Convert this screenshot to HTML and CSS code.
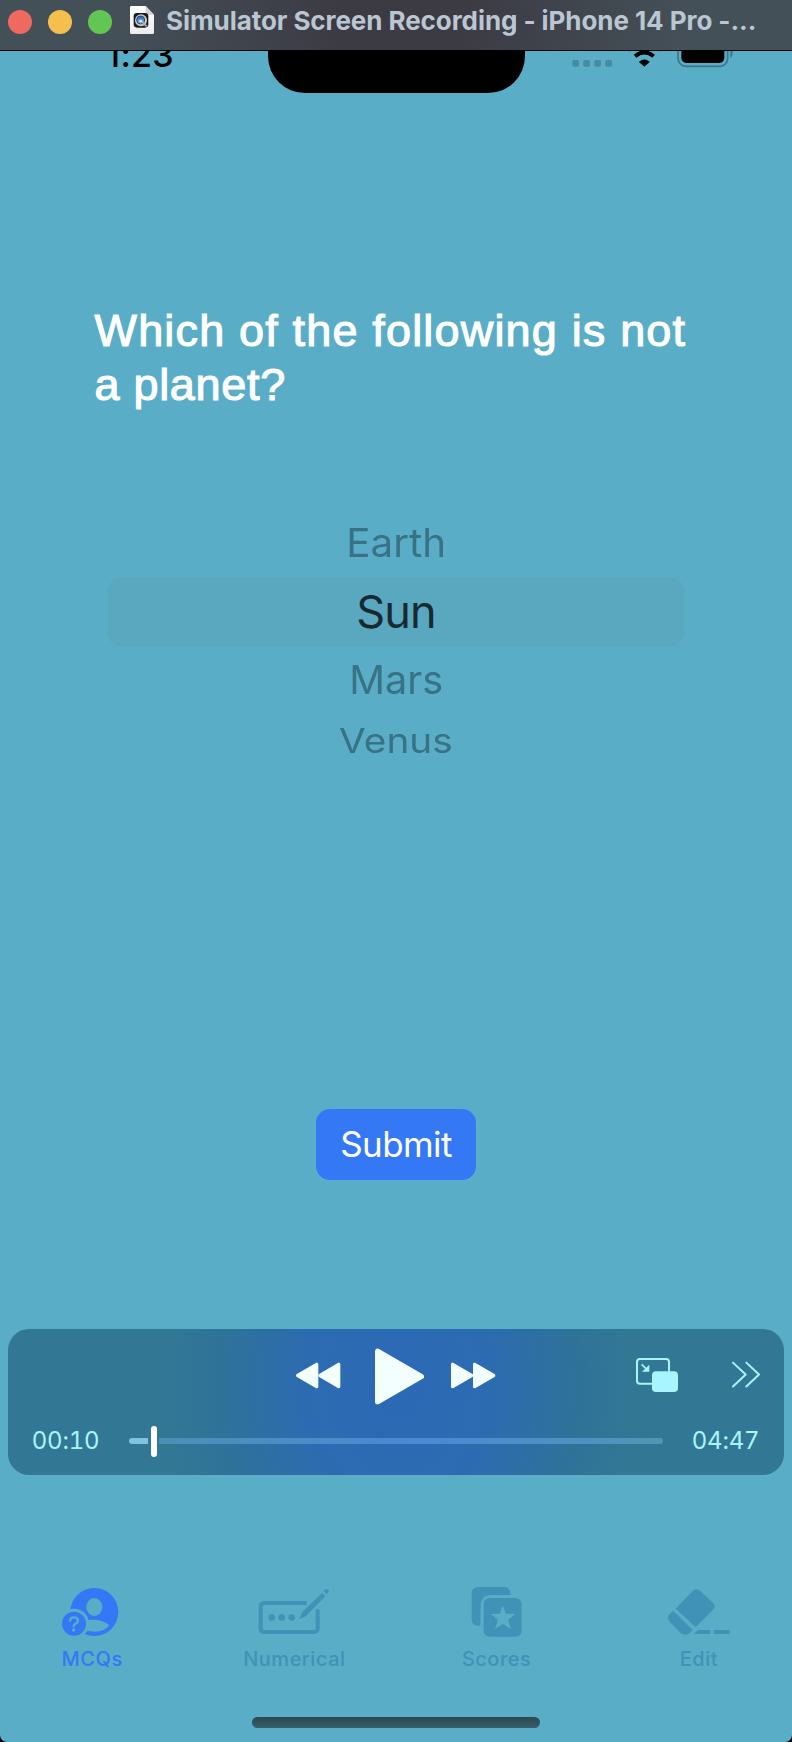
FILE: index.html
```
<!DOCTYPE html>
<html lang="en">
<head>
<meta charset="utf-8">
<title>Simulator Screen Recording</title>
<link rel="stylesheet" href="styles.css">
</head>
<body>
<header class="titlebar">
  <span class="light red"></span>
  <span class="light yellow"></span>
  <span class="light green"></span>
  <svg class="doc" width="26" height="30" viewBox="387 15 78 90">
    <defs>
      <linearGradient id="paper" x1="0" y1="0" x2="0" y2="1"><stop offset="0" stop-color="#fff"/><stop offset="1" stop-color="#ececec"/></linearGradient>
      <linearGradient id="lens" x1="0" y1="0" x2="0" y2="1"><stop offset="0" stop-color="#1b5fd0"/><stop offset="1" stop-color="#74c8f7"/></linearGradient>
    </defs>
    <path d="M394 18h43l25 26v54q0 4-4 4h-64q-4 0-4-4V22q0-4 4-4z" fill="url(#paper)"/>
    <path d="M437 18v22q0 4 4 4h21z" fill="#cfd1d4"/>
    <rect x="401" y="39" width="44" height="44" rx="10" fill="#1c1c1e"/>
    <circle cx="423" cy="61" r="18" fill="#c9cbd0"/>
    <circle cx="422" cy="60" r="12" fill="url(#lens)" stroke="#41444c" stroke-width="3"/>
    <path d="M424 63l16 16" stroke="#a9abb0" stroke-width="6"/>
    <circle cx="422" cy="63" r="4" fill="#d9f0ff"/>
  </svg>
  <h1 class="title">Simulator Screen Recording - iPhone 14 Pro -...</h1>
</header>
<main class="phone">
  <div class="status">
    <span class="clock">1:23</span>
    <span class="island"></span>
    <svg class="indicators" width="170" height="20" viewBox="530 153 510 60">
      <g fill="#468b9f"><rect x="540" y="180" width="20" height="20" rx="5"/><rect x="573" y="180" width="20" height="20" rx="5"/><rect x="606" y="180" width="20" height="20" rx="5"/><rect x="639" y="180" width="20" height="20" rx="5"/></g>
      <path d="M756 199l-15-13q15-13 30 0z" stroke="#000" stroke-width="2" stroke-linejoin="round"/>
      <path d="M728 169q28-24 56 0" fill="none" stroke="#000" stroke-width="12"/>
      <path d="M707 150q49-42 98 0" fill="none" stroke="#000" stroke-width="12"/>
      <rect x="857" y="120" width="149" height="79" rx="24" fill="none" stroke="#3b7788" stroke-width="5"/>
      <rect x="867" y="120" width="129" height="69" rx="15"/>
      <path d="M1014 145v29q7-5 7-17v-12z" fill="#3b7788"/>
    </svg>
  </div>
  <h2 class="question"><span class="line l1">Which of the following is not</span><span class="line l2">a planet?</span></h2>
  <ul class="picker">
    <li class="near earth"><span>Earth</span></li>
    <li class="chosen"><span>Sun</span></li>
    <li class="near mars"><span>Mars</span></li>
    <li class="far"><span>Venus</span></li>
  </ul>
  <button class="submit" type="button"><span>Submit</span></button>
  <section class="player">
    <div class="controls">
      <svg width="45" height="27" viewBox="888 155 135 81" fill="#f3ffff" stroke="#f3ffff" stroke-width="10" stroke-linejoin="round"><path d="M950 162v67l-57-33.500z"/><path d="M1016 162v67l-56-33.500z"/></svg>
      <svg class="play" width="50" height="58" viewBox="1125 113 150 174" fill="#f3ffff" stroke="#f3ffff" stroke-width="16" stroke-linejoin="round"><path d="M1133 123v151l131-75.500z"/></svg>
      <svg class="forward" width="45" height="27" viewBox="177 155 135 81" fill="#f3ffff" stroke="#f3ffff" stroke-width="10" stroke-linejoin="round"><path d="M182 162v67l57-33.500z"/><path d="M248 162v67l57-33.500z"/></svg>
      <div class="extras">
        <svg width="42" height="36" viewBox="732 141 126 108" fill="none" stroke="#a9f5ff"><path d="M780 221H744q-9 0-9-9v-56q0-9 9-9h78q9 0 9 9v28" stroke-width="6"/><rect x="780" y="184" width="78" height="62" rx="12" fill="#a9f5ff" stroke="none"/><path d="M749 163l17 17" stroke-width="5"/><path d="M772 164v21h-22z" fill="#a9f5ff" stroke="none"/></svg>
        <svg width="28" height="27" viewBox="1019 152 86 81" fill="none" stroke="#a9f5ff" stroke-width="6" stroke-linecap="round" stroke-linejoin="round"><path d="M1022 156l39 36.500-39 37"/><path d="M1063 156l39 36.500-39 37"/></svg>
      </div>
    </div>
    <div class="timeline">
      <span class="time">00:10</span>
      <div class="track"><span class="played"></span><span class="knob"></span><span class="rest"></span></div>
      <span class="time">04:47</span>
    </div>
  </section>
  <nav class="tabs">
    <a class="tab active">
      <svg width="60.670" height="52" viewBox="186 78 182 156" fill="currentColor">
        <mask id="person"><path fill="#fff" d="M180 70h200v170H180z"/><g fill="#000"><ellipse cx="283" cy="141" rx="24" ry="27"/><path d="M250 183q33-7 54 0 18 6 23 13-11 19-44 19-18 0-33-8z"/><circle cx="222" cy="191" r="45"/></g></mask>
        <circle cx="283" cy="156" r="72" mask="url(#person)"/>
        <circle cx="222" cy="191" r="36"/>
        <path d="M210 182q1-10 12-10t12 9q0 7-7 10-6 3-6 8" fill="none" stroke="#5aadc6" stroke-width="7" stroke-linecap="round"/><circle cx="221" cy="210" r="5" fill="#5aadc6"/>
      </svg>
      <span>MCQs</span>
    </a>
    <a class="tab numerical">
      <svg width="72" height="52" viewBox="775 78 216 156" fill="currentColor">
        <path d="M921 129H794q-11 0-11 11v65q0 11 11 11h149q11 0 11-11v-57" fill="none" stroke="currentColor" stroke-width="12"/>
        <circle cx="816" cy="172.500" r="10"/><circle cx="846" cy="172.500" r="10"/><circle cx="876" cy="172.500" r="10"/>
        <path d="M899 177l9-21 57-55q3-2 6 1l3 3q3 3 1 6l-56 57z"/><path d="M972 93l5-5q4-3 8 1t2 8l-6 6z"/>
      </svg>
      <span>Numerical</span>
    </a>
    <a class="tab scores">
      <svg width="51" height="52" viewBox="238 78 153 156" fill="currentColor">
        <path d="M266 197h-6q-20 0-20-20v-76q0-20 20-20h76q20 0 21 24h-59q-30 0-31 31z"/>
        <path fill-rule="evenodd" d="M296 114h74q20 0 20 20v76q0 20-20 20h-74q-20 0-20-20v-76q0-20 20-20zM333.500 135l-9 26-27 1 21 17-8 28 23-16 24 16-8-28 21-17-28-1z"/>
      </svg>
      <span>Scores</span>
    </a>
    <a class="tab edit">
      <svg width="62" height="52" viewBox="829 78 186 156" fill="currentColor">
        <path d="M852 146l52-54q10-9 21 0l40 38q8 9 0 18l-53 54z"/>
        <path d="M845 152l58 58-8 9q-13 11-28 0l-33-34q-10-12 0-22z"/>
        <path d="M907 222q8-12 18-12h26q6 0 6 6t-6 6z"/><rect x="966" y="210" width="49" height="12" rx="6"/>
      </svg>
      <span>Edit</span>
    </a>
  </nav>
  <div class="home"></div>
</main>
</body>
</html>
```
FILE: styles.css
```
* { box-sizing: border-box; }

body {
  margin: 0;
  width: 792px;
  height: 1742px;
  overflow: hidden;
  display: flex;
  flex-direction: column;
  background: #000;
  font-family: Inter, "Liberation Sans", sans-serif;
}

h1, h2, ul { margin: 0; padding: 0; list-style: none; }
svg { display: block; flex: none; overflow: visible; }
span { white-space: nowrap; }

.titlebar {
  flex: none;
  height: 51px;
  padding: 0 8px 7px;
  display: flex;
  align-items: center;
  border-bottom: 1px solid #000;
  background: radial-gradient(ellipse 290px 190px at 400px 20px, #3c3a43 20%, #445058 100%);
}
.light { width: 24px; height: 24px; border-radius: 50%; margin-right: 16px; }
.red { background: #ee6a5f; }
.yellow { background: #f5bf4f; }
.green { background: #62c655; }
.doc { margin: -3px 0 0 1px; }
.title {
  margin: -2px 0 0 11px;
  font-size: 26px;
  line-height: 32px;
  font-weight: 700;
  letter-spacing: -0.070px;
  color: #bac6d2;
  white-space: nowrap;
}

.phone {
  flex: 1;
  display: flex;
  flex-direction: column;
  background: #5aadc6;
  border-radius: 0 0 7px 7px;
  overflow: hidden;
}

.status {
  flex: none;
  height: 42px;
  overflow: hidden;
  display: flex;
  align-items: flex-start;
}
.clock {
  width: 267.5px;
  padding-left: 106px;
  margin-top: -17px;
  font-size: 34px;
  line-height: 41px;
  font-weight: 550;
  letter-spacing: 0.300px;
  color: #000;
}
.island {
  width: 257px;
  height: 41.500px;
  background: #000;
  border-radius: 0 0 37px 37px;
}
.indicators { margin-left: 44px; }

.question {
  flex: none;
  height: 107px;
  margin: 211px 0 0 94.500px;
  font: 400 45px/53.500px "Liberation Sans", Arial, sans-serif;
  color: #fff;
  -webkit-text-stroke: 1.100px #fff;
}
.line { display: block; }
.l1 { letter-spacing: 1.170px; }
.l2 { letter-spacing: 0.700px; }

.picker {
  flex: none;
  width: 578px;
  height: 268px;
  margin: 98px 0 0 107px;
  display: flex;
  flex-direction: column;
  text-align: center;
  color: #397284;
}
.picker span { display: inline-block; }
.near { height: 67.500px; line-height: 67.500px; font-size: 39px; }
.earth span { transform: scaleX(1.035); }
.mars { line-height: 65px; }
.mars span { transform: scaleX(1.015); }
.chosen {
  height: 70.500px;
  line-height: 70.500px;
  border-radius: 16px;
  background: #5aa7c0;
  color: #172a31;
  font-size: 45px;
}
.chosen span { letter-spacing: -0.800px; }
.far { height: 52px; line-height: 52px; font-size: 34px; }
.far span { transform: scaleX(1.140); }

.submit {
  flex: none;
  align-self: center;
  width: 160px;
  height: 71px;
  margin-top: 332px;
  padding: 0;
  border: 0;
  border-radius: 14px;
  background: #3478f6;
  color: #fff;
  font: 380 35px/71px Inter, sans-serif;
  letter-spacing: -0.600px;
}

.player {
  flex: none;
  height: 146px;
  margin: 149px 8px 0;
  border-radius: 21px;
  background: radial-gradient(ellipse 235px 290px at 390px 60px, #2c69b6 0%, #2d6bb1 40%, #2f7299 76%, #327895 100%);
}
.controls {
  height: 93px;
  display: flex;
  align-items: center;
  padding: 0 24px 0 288px;
}
.play { margin: 3px 0 0 34px; }
.forward { margin-left: 26px; }
.extras { flex: 1; display: flex; justify-content: flex-end; align-items: center; gap: 54px; }
.extras svg { margin-top: -2px; }
.timeline {
  height: 38px;
  display: flex;
  align-items: center;
  justify-content: space-between;
  padding: 0 25px 0 24px;
}
.time { width: 67px; display: flex; justify-content: center; font-size: 24px; line-height: 38px; font-weight: 400; letter-spacing: -0.200px; color: #a9f5ff; font-variant-numeric: tabular-nums; }
.track { width: 534px; height: 31px; display: flex; align-items: center; }
.played { width: 19px; height: 6px; border-radius: 3px 0 0 3px; background: #7ec3e0; }
.knob { width: 6px; height: 31px; margin: 0 2.500px 0 3px; border-radius: 3px; background: #fff; }
.rest { flex: 1; height: 6px; border-radius: 0 3px 3px 0; background: linear-gradient(90deg, #4a90b4, #4b89d0 45%, #4b89d0 55%, #5096b6); }

.tabs {
  flex: none;
  display: grid;
  grid-template-columns: repeat(4, 1fr);
  margin: 111px -8px 0 -9px;
}
.tab { display: flex; flex-direction: column; align-items: center; color: #4092b7; }
.tab span { font-size: 20px; line-height: 28px; margin-top: 6.500px; font-weight: 450; letter-spacing: 0.500px; }
.tab.active { color: #3478f6; }

.home {
  flex: none;
  align-self: center;
  width: 288px;
  height: 10.500px;
  margin-top: 44.500px;
  border-radius: 6px;
  background: linear-gradient(#2b4850, #375f6b);
}
```
